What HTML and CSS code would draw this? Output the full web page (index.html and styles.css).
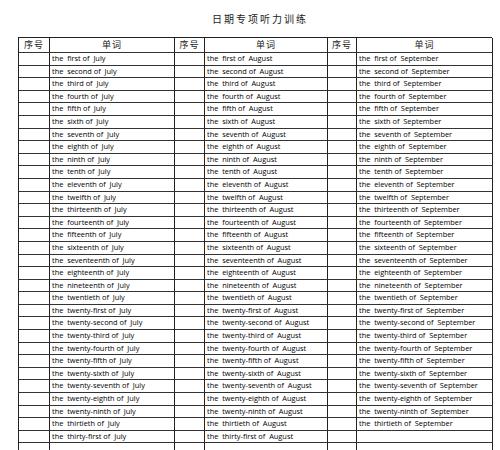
FILE: index.html
```html
<!DOCTYPE html>
<html lang="zh">
<head>
<meta charset="utf-8">
<title>日期专项听力训练</title>
<link rel="stylesheet" href="styles.css">
</head>
<body>
<div class="page">
  <h1 class="title">日期专项听力训练</h1>
  <div class="sheet">
    <div class="hd">序号</div><div class="hd">单词</div><div class="hd">序号</div><div class="hd">单词</div><div class="hd">序号</div><div class="hd">单词</div>
    <div class="c"></div><div class="w">the  first of  July</div><div class="c"></div><div class="w">the  first of  August</div><div class="c"></div><div class="w">the  first of  September</div>
    <div class="c"></div><div class="w">the  second of  July</div><div class="c"></div><div class="w">the  second of  August</div><div class="c"></div><div class="w">the  second of  September</div>
    <div class="c"></div><div class="w">the  third of  July</div><div class="c"></div><div class="w">the  third of  August</div><div class="c"></div><div class="w">the  third of  September</div>
    <div class="c"></div><div class="w">the  fourth of  July</div><div class="c"></div><div class="w">the  fourth of  August</div><div class="c"></div><div class="w">the  fourth of  September</div>
    <div class="c"></div><div class="w">the  fifth of  July</div><div class="c"></div><div class="w">the  fifth of  August</div><div class="c"></div><div class="w">the  fifth of  September</div>
    <div class="c"></div><div class="w">the  sixth of  July</div><div class="c"></div><div class="w">the  sixth of  August</div><div class="c"></div><div class="w">the  sixth of  September</div>
    <div class="c"></div><div class="w">the  seventh of  July</div><div class="c"></div><div class="w">the  seventh of  August</div><div class="c"></div><div class="w">the  seventh of  September</div>
    <div class="c"></div><div class="w">the  eighth of  July</div><div class="c"></div><div class="w">the  eighth of  August</div><div class="c"></div><div class="w">the  eighth of  September</div>
    <div class="c"></div><div class="w">the  ninth of  July</div><div class="c"></div><div class="w">the  ninth of  August</div><div class="c"></div><div class="w">the  ninth of  September</div>
    <div class="c"></div><div class="w">the  tenth of  July</div><div class="c"></div><div class="w">the  tenth of  August</div><div class="c"></div><div class="w">the  tenth of  September</div>
    <div class="c"></div><div class="w">the  eleventh of  July</div><div class="c"></div><div class="w">the  eleventh of  August</div><div class="c"></div><div class="w">the  eleventh of  September</div>
    <div class="c"></div><div class="w">the  twelfth of  July</div><div class="c"></div><div class="w">the  twelfth of  August</div><div class="c"></div><div class="w">the  twelfth of  September</div>
    <div class="c"></div><div class="w">the  thirteenth of  July</div><div class="c"></div><div class="w">the  thirteenth of  August</div><div class="c"></div><div class="w">the  thirteenth of  September</div>
    <div class="c"></div><div class="w">the  fourteenth of  July</div><div class="c"></div><div class="w">the  fourteenth of  August</div><div class="c"></div><div class="w">the  fourteenth of  September</div>
    <div class="c"></div><div class="w">the  fifteenth of  July</div><div class="c"></div><div class="w">the  fifteenth of  August</div><div class="c"></div><div class="w">the  fifteenth of  September</div>
    <div class="c"></div><div class="w">the  sixteenth of  July</div><div class="c"></div><div class="w">the  sixteenth of  August</div><div class="c"></div><div class="w">the  sixteenth of  September</div>
    <div class="c"></div><div class="w">the  seventeenth of  July</div><div class="c"></div><div class="w">the  seventeenth of  August</div><div class="c"></div><div class="w">the  seventeenth of  September</div>
    <div class="c"></div><div class="w">the  eighteenth of  July</div><div class="c"></div><div class="w">the  eighteenth of  August</div><div class="c"></div><div class="w">the  eighteenth of  September</div>
    <div class="c"></div><div class="w">the  nineteenth of  July</div><div class="c"></div><div class="w">the  nineteenth of  August</div><div class="c"></div><div class="w">the  nineteenth of  September</div>
    <div class="c"></div><div class="w">the  twentieth of  July</div><div class="c"></div><div class="w">the  twentieth of  August</div><div class="c"></div><div class="w">the  twentieth of  September</div>
    <div class="c"></div><div class="w">the  twenty-first of  July</div><div class="c"></div><div class="w">the  twenty-first of  August</div><div class="c"></div><div class="w">the  twenty-first of  September</div>
    <div class="c"></div><div class="w">the  twenty-second of  July</div><div class="c"></div><div class="w">the  twenty-second of  August</div><div class="c"></div><div class="w">the  twenty-second of  September</div>
    <div class="c"></div><div class="w">the  twenty-third of  July</div><div class="c"></div><div class="w">the  twenty-third of  August</div><div class="c"></div><div class="w">the  twenty-third of  September</div>
    <div class="c"></div><div class="w">the  twenty-fourth of  July</div><div class="c"></div><div class="w">the  twenty-fourth of  August</div><div class="c"></div><div class="w">the  twenty-fourth of  September</div>
    <div class="c"></div><div class="w">the  twenty-fifth of  July</div><div class="c"></div><div class="w">the  twenty-fifth of  August</div><div class="c"></div><div class="w">the  twenty-fifth of  September</div>
    <div class="c"></div><div class="w">the  twenty-sixth of  July</div><div class="c"></div><div class="w">the  twenty-sixth of  August</div><div class="c"></div><div class="w">the  twenty-sixth of  September</div>
    <div class="c"></div><div class="w">the  twenty-seventh of  July</div><div class="c"></div><div class="w">the  twenty-seventh of  August</div><div class="c"></div><div class="w">the  twenty-seventh of  September</div>
    <div class="c"></div><div class="w">the  twenty-eighth of  July</div><div class="c"></div><div class="w">the  twenty-eighth of  August</div><div class="c"></div><div class="w">the  twenty-eighth of  September</div>
    <div class="c"></div><div class="w">the  twenty-ninth of  July</div><div class="c"></div><div class="w">the  twenty-ninth of  August</div><div class="c"></div><div class="w">the  twenty-ninth of  September</div>
    <div class="c"></div><div class="w">the  thirtieth of  July</div><div class="c"></div><div class="w">the  thirtieth of  August</div><div class="c"></div><div class="w">the  thirtieth of  September</div>
    <div class="c"></div><div class="w">the  thirty-first of  July</div><div class="c"></div><div class="w">the  thirty-first of  August</div><div class="c"></div><div class="w"></div>
    <div class="c"></div><div class="w"></div><div class="c"></div><div class="w"></div><div class="c"></div><div class="w"></div>
  </div>
</div>
</body>
</html>
```
FILE: styles.css
```css
* { box-sizing: border-box; }
html, body { margin: 0; padding: 0; background: #fff; }
body { width: 500px; height: 450px; overflow: hidden; color: #111; }
.page { padding-left: 18px; }
.title {
  margin: 0;
  height: 37px;
  padding-top: 12px;
  padding-left: 10px;
  font-family: "Noto Sans CJK SC", sans-serif;
  font-weight: normal;
  font-size: 10px;
  line-height: 14px;
  letter-spacing: 2px;
  text-align: center;
  width: 474px;
  color: #222;
}
.sheet {
  display: grid;
  grid-template-columns: 31px 125px 30px 123px 29px 136px;
  grid-template-rows: 15px;
  grid-auto-rows: 12.6px;
  width: 474px;
  border-top: 1px solid #222;
  border-left: 1px solid #222;
}
.sheet > div {
  border-right: 1px solid #222;
  border-bottom: 1px solid #333;
  overflow: hidden;
  white-space: pre;
}
.hd {
  font-family: "Noto Sans CJK SC", sans-serif;
  font-size: 9px;
  line-height: 14px;
  text-align: center;
  letter-spacing: 1px;
  color: #222;
}
.w {
  font-family: "Open Sans", sans-serif;
  font-size: 7.4px;
  line-height: 11.6px;
  padding-left: 2px;
  color: #000;
}
```
